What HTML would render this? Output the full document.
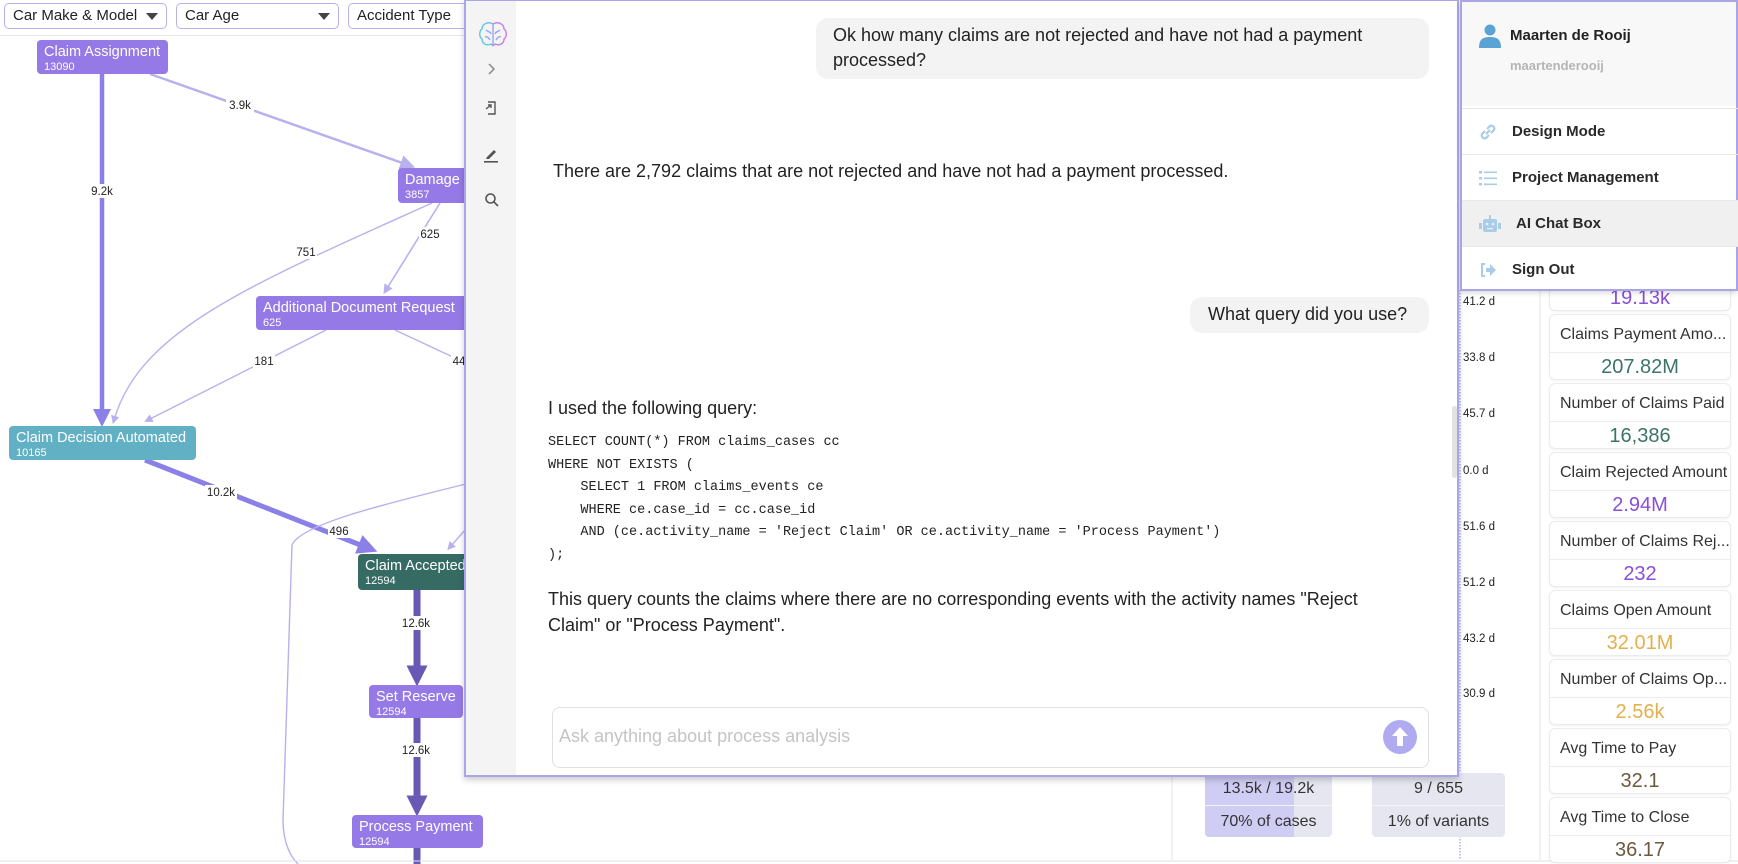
<!DOCTYPE html>
<html><head><meta charset="utf-8"><style>
*{box-sizing:border-box;margin:0;padding:0}
body{width:1738px;height:864px;overflow:hidden;background:#fff;font-family:"Liberation Sans",Arial,sans-serif;position:relative;color:#222}
.abs{position:absolute}
.dd{position:absolute;top:3px;height:26px;border:1.5px solid #b9b2ea;border-radius:5px;font-size:15px;line-height:23px;padding-left:8px;color:#222;background:#fff;white-space:nowrap;overflow:hidden}
.dd .car{position:absolute;right:8px;top:9px;width:0;height:0;border-left:6px solid transparent;border-right:6px solid transparent;border-top:7px solid #444}
.node{position:absolute;color:#fff;border-radius:4px;font-size:14.5px;padding:4px 0 0 7px;line-height:17px;white-space:nowrap;overflow:hidden}
.node small{display:block;font-size:11px;line-height:12px}
.chat{position:absolute;left:464px;top:0;width:995px;height:777px;background:#fff;border:2px solid #aaa5e6;border-top:1px solid #aaa5e6;box-shadow:0 3px 6px rgba(0,0,0,.2);overflow:hidden}
.side{position:absolute;left:0;top:0;width:50px;height:100%;background:#f4f4f5}
.bub{position:absolute;background:#f3f3f4;border-radius:12px;font-size:18px;line-height:25px;color:#222}
.txt{position:absolute;font-size:18px;line-height:26px;color:#222;white-space:nowrap}
pre{position:absolute;font-family:"Liberation Mono",monospace;font-size:13.5px;line-height:22.6px;color:#222}
.menu{position:absolute;left:1460px;top:0;width:278px;height:291px;background:#fff;border:2px solid #aaa5e6;box-shadow:0 2px 5px rgba(0,0,0,.15)}
.mi{position:absolute;left:0;width:276px;height:46px;border-top:1px solid #e8e8e8;font-size:15px;font-weight:bold;color:#2a2a2a;line-height:46px;padding-left:50px}
.mi svg{position:absolute;left:17px;top:14px}
.card{position:absolute;left:1549px;width:182px;height:66px;border:1px solid #ececec;border-radius:6px;background:#fff;box-shadow:0 1px 2px rgba(0,0,0,.06)}
.card .t{height:38px;line-height:40px;padding-left:10px;font-size:16px;color:#333;border-bottom:1px solid #ececec;white-space:nowrap}
.card .v{text-align:center;font-size:20px;line-height:28px}
.dl{position:absolute;left:1463px;font-size:11.5px;color:#222}
</style></head><body>

<!-- filter bar -->
<div class="abs" style="left:0;top:35px;width:464px;height:1px;background:#e6e6e6"></div>
<div class="dd" style="left:4px;width:163px">Car Make &amp; Model<span class="car"></span></div>
<div class="dd" style="left:176px;width:163px">Car Age<span class="car"></span></div>
<div class="dd" style="left:348px;width:120px">Accident Type</div>

<!-- graph -->
<svg class="abs" style="left:0;top:0" width="1738" height="864">
<defs>
<marker id="a1" markerWidth="4" markerHeight="4" refX="2" refY="2" orient="auto" markerUnits="strokeWidth"><path d="M0,0 L4,2 L0,4z" fill="#8a80e8"/></marker>
<marker id="a2" markerWidth="6" markerHeight="6" refX="3" refY="3" orient="auto" markerUnits="strokeWidth"><path d="M0,0 L6,3 L0,6z" fill="#b7b1ee"/></marker>
<marker id="a3" markerWidth="3" markerHeight="3" refX="1.5" refY="1.5" orient="auto" markerUnits="strokeWidth"><path d="M0,0 L3,1.5 L0,3z" fill="#6a58b5"/></marker>
</defs>
<g fill="none">
<path d="M102,74 L102,418" stroke="#8a80e8" stroke-width="4.5" marker-end="url(#a1)"/>
<path d="M150,74 L408,165" stroke="#b7b1ee" stroke-width="2.5" marker-end="url(#a2)"/>
<path d="M440,203 L386,290" stroke="#b7b1ee" stroke-width="1.6" marker-end="url(#a2)"/>
<path d="M432,203 C250,285 140,330 114,420" stroke="#b7b1ee" stroke-width="1.4" marker-end="url(#a2)"/>
<path d="M326,330 L148,420" stroke="#b7b1ee" stroke-width="1.4" marker-end="url(#a2)"/>
<path d="M395,330 L470,365" stroke="#b7b1ee" stroke-width="1.4"/>
<path d="M145,460 L368,548" stroke="#8a80e8" stroke-width="5" marker-end="url(#a1)"/>
<path d="M466,484 C380,505 300,525 292,545 L283,820 C283,845 292,858 298,864" stroke="#b7b1ee" stroke-width="1.4"/>
<path d="M466,529 L450,547" stroke="#b7b1ee" stroke-width="1.4" marker-end="url(#a2)"/>
<path d="M417,590 L417,676" stroke="#6a58b5" stroke-width="7" marker-end="url(#a3)"/>
<path d="M417,718 L417,806" stroke="#6a58b5" stroke-width="7" marker-end="url(#a3)"/>
<path d="M417,848 L417,864" stroke="#6a58b5" stroke-width="7"/>
</g>
<g font-family="Liberation Sans,Arial,sans-serif" font-size="11.5" fill="#222" text-anchor="middle">
<rect x="88" y="184" width="28" height="14" fill="#fff"/><text x="102" y="195">9.2k</text>
<rect x="226" y="98" width="28" height="14" fill="#fff"/><text x="240" y="109">3.9k</text>
<rect x="419" y="227" width="24" height="14" fill="#fff"/><text x="430" y="238">625</text>
<rect x="295" y="245" width="22" height="14" fill="#fff"/><text x="306" y="256">751</text>
<rect x="253" y="354" width="22" height="14" fill="#fff"/><text x="264" y="365">181</text>
<rect x="451" y="354" width="14" height="14" fill="#fff"/><text x="459" y="365">44</text>
<rect x="205" y="485" width="32" height="14" fill="#fff"/><text x="221" y="496">10.2k</text>
<rect x="328" y="524" width="22" height="14" fill="#fff"/><text x="339" y="535">496</text>
<rect x="400" y="616" width="32" height="14" fill="#fff"/><text x="416" y="627">12.6k</text>
<rect x="400" y="743" width="32" height="14" fill="#fff"/><text x="416" y="754">12.6k</text>
</g>
<line x1="0" y1="861" x2="1738" y2="861" stroke="#e2e2e2"/>
<line x1="1172" y1="776" x2="1172" y2="860" stroke="#e6e6e6"/>
<line x1="1540" y1="290" x2="1540" y2="860" stroke="#e6e6e6"/>
<line x1="1460" y1="290" x2="1460" y2="860" stroke="#8a84e0" stroke-dasharray="1.5,1.5"/>
</svg>

<div class="node" style="left:37px;top:40px;width:131px;height:34px;background:#9579e6">Claim Assignment<small>13090</small></div>
<div class="node" style="left:398px;top:168px;width:80px;height:35px;background:#9579e6">Damage<small>3857</small></div>
<div class="node" style="left:256px;top:296px;width:220px;height:34px;background:#9579e6">Additional Document Request<small>625</small></div>
<div class="node" style="left:9px;top:426px;width:187px;height:34px;background:#62b0c4">Claim Decision Automated<small>10165</small></div>
<div class="node" style="left:358px;top:554px;width:120px;height:36px;background:#356b63">Claim Accepted<small>12594</small></div>
<div class="node" style="left:369px;top:685px;width:94px;height:33px;background:#9579e6">Set Reserve<small>12594</small></div>
<div class="node" style="left:352px;top:815px;width:131px;height:33px;background:#9579e6">Process Payment<small>12594</small></div>

<!-- duration labels -->
<div class="dl" style="top:296px">41.2 d</div>
<div class="dl" style="top:352px">33.8 d</div>
<div class="dl" style="top:408px">45.7 d</div>
<div class="dl" style="top:465px">0.0 d</div>
<div class="dl" style="top:521px">51.6 d</div>
<div class="dl" style="top:577px">51.2 d</div>
<div class="dl" style="top:633px">43.2 d</div>
<div class="dl" style="top:688px">30.9 d</div>

<!-- stats boxes -->
<div class="abs" style="left:1205px;top:773px;width:127px;height:64px;background:#e6e6f0;border-radius:4px;overflow:hidden">
 <div class="abs" style="left:0;top:0;width:89px;height:64px;background:#cfcdf3"></div>
 <div class="abs" style="left:0;top:32px;width:127px;height:1px;background:#f4f4f8"></div>
 <div class="abs" style="left:0;top:0;width:127px;text-align:center;font-size:16px;line-height:32px;color:#333">13.5k / 19.2k</div>
 <div class="abs" style="left:0;top:33px;width:127px;text-align:center;font-size:16px;line-height:32px;color:#333">70% of cases</div>
</div>
<div class="abs" style="left:1372px;top:773px;width:133px;height:64px;background:#e6e6f0;border-radius:4px;overflow:hidden">
 <div class="abs" style="left:0;top:32px;width:133px;height:1px;background:#f4f4f8"></div>
 <div class="abs" style="left:0;top:0;width:133px;text-align:center;font-size:16px;line-height:32px;color:#333">9 / 655</div>
 <div class="abs" style="left:0;top:33px;width:133px;text-align:center;font-size:16px;line-height:32px;color:#333">1% of variants</div>
</div>

<!-- KPI cards -->
<div class="card" style="top:245px"><div class="t">Number of Claims</div><div class="v" style="color:#8a4fd8">19.13k</div></div>
<div class="card" style="top:314px"><div class="t">Claims Payment Amo...</div><div class="v" style="color:#3d7468">207.82M</div></div>
<div class="card" style="top:383px"><div class="t">Number of Claims Paid</div><div class="v" style="color:#3d7468">16,386</div></div>
<div class="card" style="top:452px"><div class="t">Claim Rejected Amount</div><div class="v" style="color:#8a4fd8">2.94M</div></div>
<div class="card" style="top:521px"><div class="t">Number of Claims Rej...</div><div class="v" style="color:#8a4fd8">232</div></div>
<div class="card" style="top:590px"><div class="t">Claims Open Amount</div><div class="v" style="color:#e2b04c">32.01M</div></div>
<div class="card" style="top:659px"><div class="t">Number of Claims Op...</div><div class="v" style="color:#e2b04c">2.56k</div></div>
<div class="card" style="top:728px"><div class="t">Avg Time to Pay</div><div class="v" style="color:#6b5a3e">32.1</div></div>
<div class="card" style="top:797px"><div class="t">Avg Time to Close</div><div class="v" style="color:#6b5a3e">36.17</div></div>

<!-- chat panel -->
<div class="chat">
 <div class="side">
  <svg class="abs" style="left:12px;top:20px" width="30" height="28" viewBox="0 0 30 28" fill="none" stroke-width="1.4">
   <path d="M15,3 C10,0 4,3 4,8 C1,10 1,16 4,18 C4,23 9,25 13,23 L15,25" stroke="#62c6e0"/>
   <path d="M15,3 C20,0 26,3 26,8 C29,10 29,16 26,18 C26,23 21,25 17,23 L15,25" stroke="#c77ee6"/>
   <path d="M15,3 V25 M8,9 C10,11 12,10 13,13 M22,9 C20,11 18,10 17,13 M7,16 C9,15 11,17 12,19 M23,16 C21,15 19,17 18,19" stroke="#9aa6ee"/>
  </svg>
  <svg class="abs" style="left:21px;top:62px" width="10" height="12" viewBox="0 0 10 12"><path d="M2,1 L7,6 L2,11" stroke="#888" stroke-width="1.5" fill="none"/></svg>
  <svg class="abs" style="left:18px;top:99px" width="14" height="16" viewBox="0 0 14 16" fill="none" stroke="#555" stroke-width="1.4"><path d="M4,2 H11 V14 H4 M2,9 L7,5 M4,5 H7 V8"/></svg>
  <svg class="abs" style="left:17px;top:146px" width="16" height="16" viewBox="0 0 16 16"><path d="M4,10 L11,3 L13,5 L6,12 L3,12z" fill="#555"/><rect x="1" y="14" width="14" height="1.6" fill="#555"/></svg>
  <svg class="abs" style="left:18px;top:191px" width="16" height="16" viewBox="0 0 16 16" fill="none" stroke="#555" stroke-width="1.6"><circle cx="6.5" cy="6.5" r="4.5"/><path d="M10,10 L14,14"/></svg>
 </div>
 <div class="bub" style="left:350px;top:17px;width:613px;height:61px;padding:5px 0 0 17px">Ok how many claims are not rejected and have not had a payment<br>processed?</div>
 <div class="txt" style="left:87px;top:157px">There are 2,792 claims that are not rejected and have not had a payment processed.</div>
 <div class="bub" style="left:724px;top:296px;width:239px;height:36px;padding:5px 0 0 18px">What query did you use?</div>
 <div class="txt" style="left:82px;top:394px">I used the following query:</div>
<pre style="left:82px;top:431px">SELECT COUNT(*) FROM claims_cases cc
WHERE NOT EXISTS (
    SELECT 1 FROM claims_events ce
    WHERE ce.case_id = cc.case_id
    AND (ce.activity_name = 'Reject Claim' OR ce.activity_name = 'Process Payment')
);</pre>
 <div class="txt" style="left:82px;top:585px">This query counts the claims where there are no corresponding events with the activity names "Reject<br>Claim" or "Process Payment".</div>
 <div class="abs" style="left:986px;top:405px;width:5px;height:72px;background:#e2e2e2;border-radius:3px"></div>
 <div class="abs" style="left:86px;top:706px;width:877px;height:61px;border:1px solid #e0e0e0;border-radius:8px;background:#fff">
  <div class="abs" style="left:6px;top:18px;font-size:18px;color:#c4c4c4">Ask anything about process analysis</div>
  <svg class="abs" style="left:829px;top:11px" width="36" height="36" viewBox="0 0 36 36"><circle cx="18" cy="18" r="17" fill="#b0aaf0"/><path d="M18,8 L26,17 H21 V27 H15 V17 H10z" fill="#fff"/></svg>
 </div>
</div>

<!-- user menu -->
<div class="menu">
 <div class="abs" style="left:0;top:0;width:274px;height:104px;background:#f8f8f8"></div>
 <svg class="abs" style="left:17px;top:22px" width="22" height="24" viewBox="0 0 22 24"><circle cx="11" cy="6" r="5.5" fill="#5ba3d4"/><path d="M0,24 C0,15 4,13 11,13 C18,13 22,15 22,24z" fill="#5ba3d4"/></svg>
 <div class="abs" style="left:48px;top:25px;font-size:15px;font-weight:bold;color:#222">Maarten de Rooij</div>
 <div class="abs" style="left:48px;top:56px;font-size:13px;font-weight:bold;color:#b5b5b5">maartenderooij</div>
 <div class="mi" style="top:106px"><svg width="18" height="18" viewBox="0 0 18 18" fill="none" stroke="#a9cde8" stroke-width="2.2"><path d="M8,6 L11,3 A3,3 0 0 1 15,7 L12,10 M10,12 L7,15 A3,3 0 0 1 3,11 L6,8 M7,11 L11,7"/></svg>Design Mode</div>
 <div class="mi" style="top:152px"><svg width="18" height="18" viewBox="0 0 18 18" fill="#a9cde8"><rect x="0" y="2" width="3" height="2.5"/><rect x="5" y="2.5" width="13" height="1.6"/><rect x="0" y="8" width="3" height="2.5"/><rect x="5" y="8.5" width="13" height="1.6"/><rect x="0" y="14" width="3" height="2.5"/><rect x="5" y="14.5" width="13" height="1.6"/></svg>Project Management</div>
 <div class="mi" style="top:198px;background:#f0f0f0;padding-left:54px"><svg width="22" height="18" viewBox="0 0 22 18" fill="#a9cde8"><rect x="4" y="4" width="14" height="13" rx="2"/><rect x="0" y="8" width="3" height="6"/><rect x="19" y="8" width="3" height="6"/><rect x="10" y="0" width="2" height="4"/><circle cx="8" cy="9" r="1.3" fill="#f0f0f0"/><circle cx="14" cy="9" r="1.3" fill="#f0f0f0"/><rect x="8" y="13" width="6" height="1.2" fill="#f0f0f0"/></svg>AI Chat Box</div>
 <div class="mi" style="top:244px"><svg width="18" height="18" viewBox="0 0 18 18" fill="#a9cde8"><path d="M6,2 H2 V16 H6 V14 H4 V4 H6z"/><path d="M7,7 H11 V3 L17,9 L11,15 V11 H7z"/></svg>Sign Out</div>
</div>
</body></html>
